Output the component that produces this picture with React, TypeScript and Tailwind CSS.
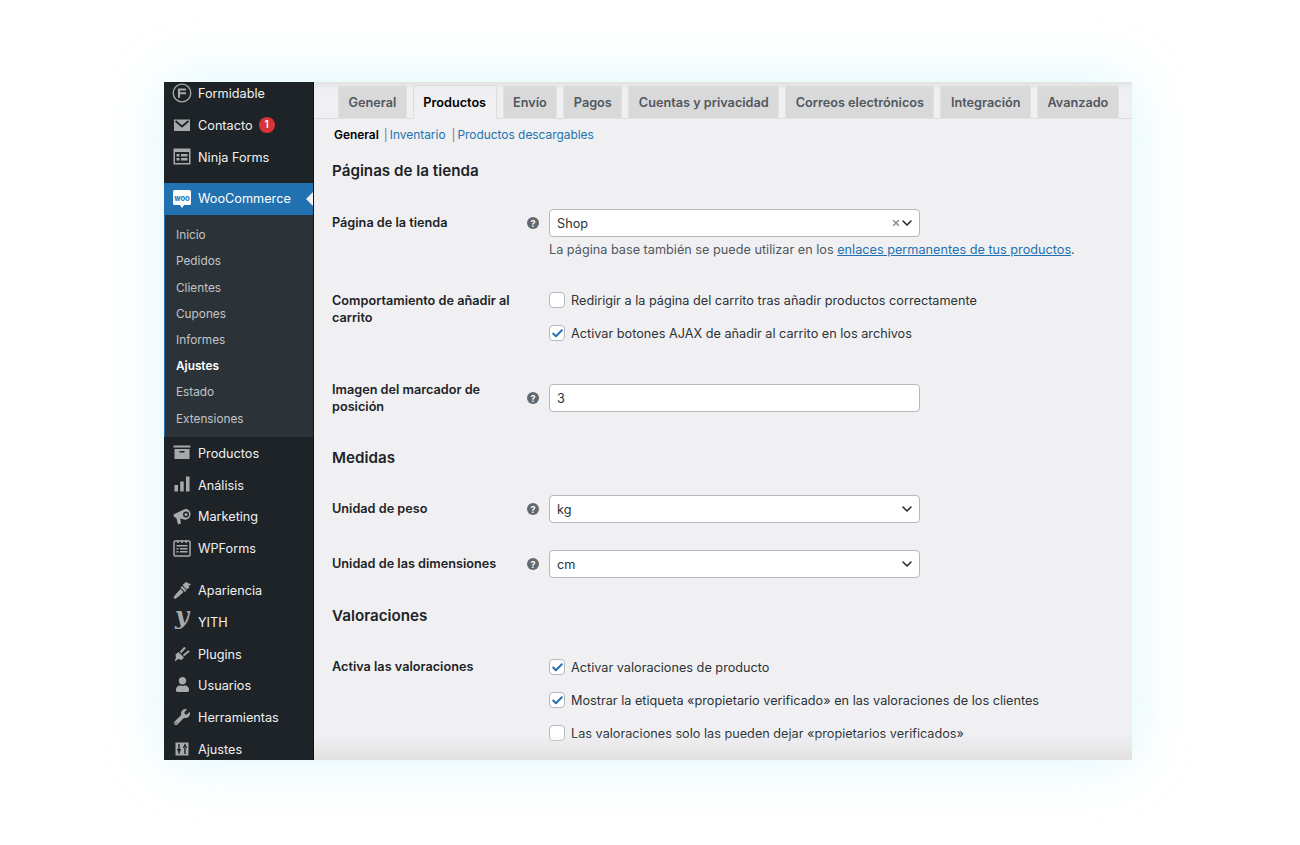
import React from "react";
import { FaUser, FaWrench } from "react-icons/fa";
import { ChevronDown, X, Check } from "lucide-react";

const Svg = ({ children }: { children: React.ReactNode }) => (
    <svg viewBox="0 0 20 20" className="w-5 h-5" fill="#a7aaad">{children}</svg>
);

const FormidableIcon = () => (
    <Svg>
        <circle cx="10" cy="10" r="8.800" fill="none" stroke="#a7aaad" strokeWidth="1.300" />
        <path d="M6 5.500h8v2H8v1.700h6v2H8v3.500H6z" />
    </Svg>
);
const MailIcon = () => (
    <Svg>
        <path d="M2 4.500h16v11.500H2z" />
        <path d="M3.500 6 10 11.500 16.500 6" fill="none" stroke="#1d2327" strokeWidth="1.800" />
    </Svg>
);
const NinjaIcon = () => (
    <Svg>
        <path d="M1.500 2.500h17V18.500h-17z" />
        <path d="M3 6h14v11H3z" fill="#1d2327" />
        <path d="M4.500 8h3v2.500h-3zM9 8h6.500v2.500H9zM4.500 12h3v2.500h-3zM9 12h6.500v2.500H9z" />
    </Svg>
);
const WooIcon = () => (
    <svg viewBox="0 0 20 20" className="w-5 h-5">
        <path d="M2.500 1h15A1.500 1.500 0 0 1 19 2.500v12a1.500 1.500 0 0 1-1.500 1.500H12l-2 3-2-3H2.500A1.500 1.500 0 0 1 1 14.500v-12A1.500 1.500 0 0 1 2.500 1z" fill="#fff" />
        <text x="10" y="11.500" textAnchor="middle" fontSize="7.500" fontWeight="700" fill="#2271b1" fontFamily="Inter, sans-serif">woo</text>
    </svg>
);
const ArchiveIcon = () => (
    <Svg>
        <path d="M1.500 3.500h17v2h-17zM2.500 7h15v10h-15z" />
        <path d="M7.500 9h5v1.500h-5z" fill="#1d2327" />
    </Svg>
);
const ChartIcon = () => (
    <Svg>
        <path d="M2.500 11h3.500v6.500H2.500zM8.200 7.500h3.500v10H8.200zM14 2.500h3.500v15H14z" />
    </Svg>
);
const MegaphoneIcon = () => (
    <Svg>
        <path d="M1.500 8.500 3 7.800 12.500 3.200C15.500 2 18.800 5 18.500 8.500 18.300 12 15 14.500 12 13.500L8.200 12.600 9 17.500 6 18.500 4.300 12C2.500 11.700 1.500 10.500 1.500 8.500z" />
        <circle cx="14" cy="8.500" r="3" fill="#1d2327" />
        <circle cx="14" cy="8.500" r="1.500" />
    </Svg>
);
const FormsIcon = () => (
    <Svg>
        <path d="M3 3h14a1 1 0 0 1 1 1v13a1 1 0 0 1-1 1H3a1 1 0 0 1-1-1V4a1 1 0 0 1 1-1z" fill="none" stroke="#a7aaad" strokeWidth="1.500" />
        <path d="M5 2h1.500v3H5zM9.200 2h1.500v3H9.200zM13.500 2H15v3h-1.500zM4.500 7h11v1.500h-11zM4.500 10h2v1.500h-2zM8 10h7.500v1.500H8zM4.500 13h2v1.500h-2zM8 13h7.500v1.500H8z" />
    </Svg>
);
const BrushIcon = () => (
    <Svg>
        <path d="M1.500 17.500 3 19C7 16.500 9.500 14 11.500 12L8.500 9C5.500 12 3.500 14.500 1.500 17.500z" />
        <path d="M8.500 7.500 13 12l1.500-1.500L10 6z" />
        <path d="M10.500 5 14 2l5 2.500-2.500 1.500 1 1.500-3 2z" />
    </Svg>
);
const PlugIcon = () => (
    <Svg>
        <path d="M2.500 18.500 4 14.500 3.500 11.500 6.500 9 12 14.500 9.500 17 6.500 16z" />
        <path d="M8.500 9.500 13 4.500M11.500 12.500 17 8" fill="none" stroke="#a7aaad" strokeWidth="2" />
    </Svg>
);
const SlidersIcon = () => (
    <Svg>
        <path d="M3.500 3.500h13v13h-13z" />
        <path d="M7 5v6M5.500 10 7 13l1.500-3M7 13.500V15M13 15V9M11.500 9 13 6l1.500 3M13 5.500V5" fill="none" stroke="#1d2327" strokeWidth="1.400" />
    </Svg>
);

const topItems = [
    { label: "Formidable", icon: <FormidableIcon /> },
    { label: "Contacto", icon: <MailIcon />, badge: "1" },
    { label: "Ninja Forms", icon: <NinjaIcon /> },
];
const subItems = ["Inicio", "Pedidos", "Clientes", "Cupones", "Informes", "Ajustes", "Estado", "Extensiones"];
const midItems = [
    { label: "Productos", icon: <ArchiveIcon /> },
    { label: "Análisis", icon: <ChartIcon /> },
    { label: "Marketing", icon: <MegaphoneIcon /> },
    { label: "WPForms", icon: <FormsIcon /> },
];
const lowItems = [
    { label: "Apariencia", icon: <BrushIcon /> },
    { label: "YITH", icon: <span className="font-['DejaVu_Serif'] italic font-bold text-[24px] leading-none text-[#a7aaad] -mt-[10px]">y</span> },
    { label: "Plugins", icon: <PlugIcon /> },
    { label: "Usuarios", icon: <FaUser size={15} color="#a7aaad" /> },
    { label: "Herramientas", icon: <FaWrench size={16} color="#a7aaad" /> },
    { label: "Ajustes", icon: <SlidersIcon /> },
];
const tabs = ["General", "Productos", "Envío", "Pagos", "Cuentas y privacidad", "Correos electrónicos", "Integración", "Avanzado"];

const MenuRow = ({ label, icon, badge }: { label: string; icon: React.ReactNode; badge?: string }) => (
    <div className="h-[31.8px] flex items-center text-[12.7px] text-[#f0f0f1]">
        <span className="w-[34px] pl-[2px] flex justify-center items-center shrink-0">{icon}</span>
        <span className="pt-[2px]">{label}</span>
        {badge && (
            <span className="ml-[6px] w-[16px] h-[16px] rounded-full bg-[#d63638] text-white text-[10px] font-semibold flex items-center justify-center">
                {badge}
            </span>
        )}
    </div>
);

const Help = () => (
    <span className="w-[12px] h-[12px] rounded-full bg-[#646970] text-white text-[9px] font-bold flex items-center justify-center leading-none">?</span>
);

const Row = ({ label, help, top, lift, children }: { label: string; help?: boolean; top?: boolean; lift?: string; children: React.ReactNode }) => (
    <div className={`flex ${top ? "items-start" : "items-center"}`}>
        <div className={`w-[195px] shrink-0 pr-[8px] text-[12.7px] leading-[17px] font-semibold text-[#1d2327] ${lift ?? ""}`}>{label}</div>
        <div className="w-[22px] shrink-0 flex justify-start">{help && <Help />}</div>
        <div className="w-[371px]">{children}</div>
    </div>
);

const Field = ({ value, clear, select }: { value: string; clear?: boolean; select?: boolean }) => (
    <div className="w-[371px] h-[28px] bg-white border border-[#b4b9be] rounded-[4px] pl-[7px] pr-[4px] flex items-center text-[12.7px] text-[#2c3338]">
        <span className="flex-1 pt-[2px]">{value}</span>
        {clear && <X size={10} strokeWidth={3.500} color="#8c8f94" className="-mr-[2px]" />}
        {select && <ChevronDown size={16} strokeWidth={2.200} color="#1d2327" />}
    </div>
);

const CheckRow = ({ label, checked }: { label: string; checked?: boolean }) => (
    <div className="flex items-center h-[16px] w-[600px] text-[12.7px] text-[#2c3338]">
        <span className="w-[16px] h-[16px] bg-white border border-[#b4b9be] rounded-[4px] flex items-center justify-center shrink-0">
            {checked && <Check size={13} strokeWidth={3.500} color="#2271b1" />}
        </span>
        <span className="ml-[6px] pt-[2px]">{label}</span>
    </div>
);

const Heading = ({ children, className }: { children: React.ReactNode; className: string }) => (
    <h2 className={`h-[24px] leading-[24px] text-[15.2px] font-semibold text-[#1d2327] ${className}`}>{children}</h2>
);

export default function App() {
    return (
        <div className="min-h-[845px] bg-white pt-[82px] pl-[164px] font-['Inter',sans-serif]">
            <div className="relative w-[968px] h-[678px] flex overflow-visible shadow-[0_0_55px_rgba(130,225,245,0.28)]">
                <aside className="w-[150px] h-full shrink-0 bg-[#1d2327] overflow-hidden border-r border-[#0f1316]">
                    <div className="-mt-[5px] h-[96px]">
                        {topItems.map(i => <MenuRow key={i.label} {...i} />)}
                    </div>
                    <div className="mt-[10px] relative h-8 bg-[#2271b1] flex items-center text-[12.7px] text-white">
                        <span className="w-[34px] pl-[2px] flex justify-center shrink-0"><WooIcon /></span>
                        <span>WooCommerce</span>
                        <span className="absolute right-0 top-[9px] border-y-[7px] border-y-transparent border-r-[7px] border-r-[#f0f0f2]" />
                    </div>
                    <div className="bg-[#2c3338] pt-[7px] pb-[5px] border-l border-[#2271b1]">
                        {subItems.map(s => (
                            <div key={s} className={`h-[26.2px] flex items-center pl-[11px] pt-[2px] text-[11.8px] ${s === "Ajustes" ? "text-white font-semibold" : "text-[#c3c4c7]"}`}>
                                {s}
                            </div>
                        ))}
                    </div>
                    {midItems.map(i => <MenuRow key={i.label} {...i} />)}
                    <div className="mt-[10px]">
                        {lowItems.map(i => <MenuRow key={i.label} {...i} />)}
                    </div>
                </aside>

                <main className="flex-1 bg-[#f0f0f2] pt-[3px] pl-[18px] overflow-hidden">
                    <div className="-ml-[18px] pl-[24px] flex gap-[6px] h-[34px] border-b border-[#dcdcde]">
                        {tabs.map(t => (
                            <div
                                key={t}
                                className={`h-[34px] px-[9.5px] pt-[1px] border whitespace-nowrap flex items-center text-[12.7px] font-semibold ${
                                    t === "Productos" ? "bg-[#f0f0f2] border-[#dcdcde] border-b-[#f0f0f2] text-black" : "bg-[#d9d9da] border-[#e2e2e3] text-[#50575e]"
                                }`}
                            >
                                {t}
                            </div>
                        ))}
                    </div>

                    <div className="h-[32px] flex items-center text-[11.9px] pl-[2px]">
                        <span className="font-semibold text-black">General</span>
                        <span className="ml-[5px] text-[#787c82]">|</span>
                        <span className="ml-[2px] text-[#2271b1]">Inventario</span>
                        <span className="ml-[6px] text-[#787c82]">|</span>
                        <span className="ml-[2px] text-[#2271b1]">Productos descargables</span>
                    </div>

                    <Heading className="mt-[8px]">Páginas de la tienda</Heading>

                    <div className="mt-[26px]">
                        <Row label="Página de la tienda" help lift="-mt-[2px]">
                            <Field value="Shop" clear select />
                        </Row>
                    </div>
                    <p className="ml-[217px] mt-[4px] h-[18px] leading-[18px] text-[12.7px] text-[#50575e] whitespace-nowrap">
                        La página base también se puede utilizar en los{" "}
                        <span className="text-[#2271b1] underline">enlaces permanentes de tus productos</span>.
                    </p>

                    <div className="mt-[33px]">
                        <Row label="Comportamiento de añadir al carrito" top>
                            <div className="flex flex-col gap-[17px]">
                                <CheckRow label="Redirigir a la página del carrito tras añadir productos correctamente" />
                                <CheckRow label="Activar botones AJAX de añadir al carrito en los archivos" checked />
                            </div>
                        </Row>
                    </div>

                    <div className="mt-[40px]">
                        <Row label="Imagen del marcador de posición" help>
                            <Field value="3" />
                        </Row>
                    </div>

                    <Heading className="mt-[31px]">Medidas</Heading>

                    <div className="mt-[25px]">
                        <Row label="Unidad de peso" help lift="-mt-[2px]">
                            <Field value="kg" select />
                        </Row>
                    </div>
                    <div className="mt-[27px]">
                        <Row label="Unidad de las dimensiones" help lift="-mt-[2px]">
                            <Field value="cm" select />
                        </Row>
                    </div>

                    <Heading className="mt-[26px]">Valoraciones</Heading>

                    <div className="mt-[31px]">
                        <Row label="Activa las valoraciones" top lift="-mt-[1px]">
                            <div className="flex flex-col gap-[17px]">
                                <CheckRow label="Activar valoraciones de producto" checked />
                                <CheckRow label="Mostrar la etiqueta «propietario verificado» en las valoraciones de los clientes" checked />
                                <CheckRow label="Las valoraciones solo las pueden dejar «propietarios verificados»" />
                            </div>
                        </Row>
                    </div>
                </main>

                {/* vignettes over the top and bottom of the screenshot */}
                <div className="absolute left-[150px] right-0 top-0 h-[8px] bg-gradient-to-b from-[#e2e2e3] to-transparent pointer-events-none" />
                <div className="absolute left-[150px] right-0 bottom-0 h-[26px] bg-gradient-to-b from-transparent to-[#e2e2e3] pointer-events-none" />
            </div>
        </div>
    );
}
